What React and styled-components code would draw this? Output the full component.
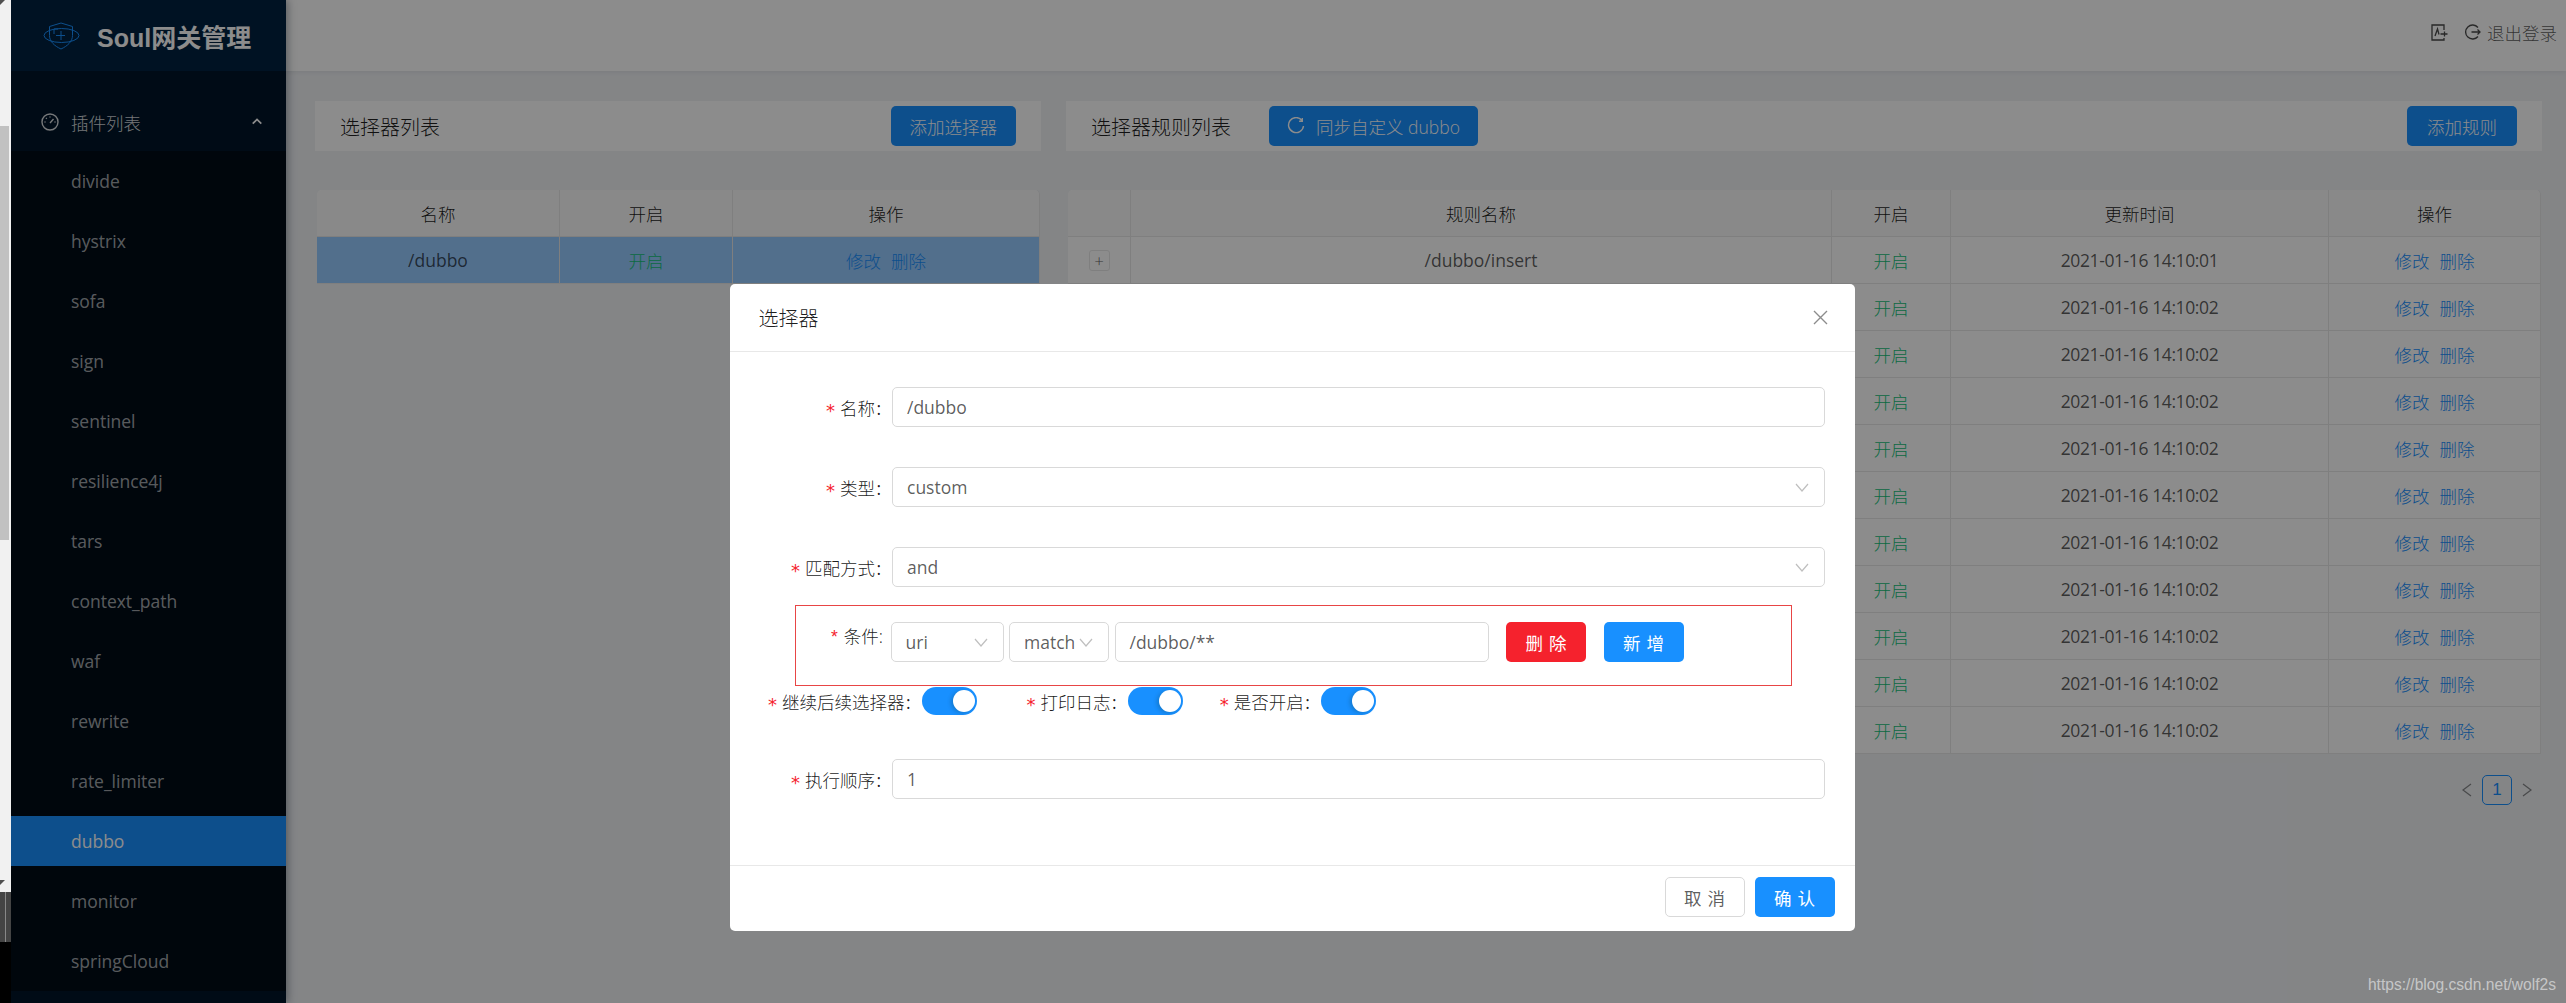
import React from "react";
import styled, { createGlobalStyle } from "styled-components";

const GlobalStyle = createGlobalStyle`
  html, body {
    margin: 0;
    padding: 0;
    height: 100%;
    overflow: hidden;
    background: #f0f2f5;
  }
  body {
    font-family: "Open Sans", "Noto Sans CJK SC", sans-serif;
    font-size: 17.5px;
    color: rgba(0, 0, 0, 0.65);
  }
  * { box-sizing: border-box; }
`;

const Page = styled.div`
  position: relative;
  display: flex;
  width: 2566px;
  height: 1003px;
  overflow: hidden;
`;

const ScrollStrip = styled.div`
  position: relative;
  flex: none;
  width: 11px;
  background: #f1f1f1;
  z-index: 7;
`;

const StripArrow = styled.div`
  position: absolute;
  left: 0;
  top: ${(p) => p.$top}px;
  width: 0;
  height: 0;
  border-top: 5px solid #505050;
  border-right: 5px solid transparent;
`;

const StripThumb = styled.div`
  position: absolute;
  left: 0;
  top: 126px;
  width: 9px;
  height: 414px;
  background: #c1c1c1;
`;

const StripBottom = styled.div`
  position: absolute;
  left: 0;
  right: 0;
  top: 892px;
  bottom: 0;
  background:
    linear-gradient(90deg, transparent 5px, #888 5px, #888 6px, transparent 6px) 0 0 / 100% 50px no-repeat,
    linear-gradient(#444 50px, #000 50px);
`;

const Sider = styled.aside`
  position: relative;
  flex: none;
  width: 275px;
  height: 1003px;
  background: #001529;
  box-shadow: 2px 0 8px rgba(0, 21, 41, 0.35);
  z-index: 2;
`;

const Logo = styled.div`
  display: flex;
  align-items: center;
  height: 71px;
  padding-left: 32px;
  gap: 17px;
  background: #002140;
  color: #fff;
  font-size: 25px;
  font-weight: 700;
  font-family: "Liberation Sans", "Noto Sans CJK SC", sans-serif;
  white-space: nowrap;
`;

const MenuTitle = styled.div`
  display: flex;
  align-items: center;
  height: 50px;
  margin-top: 26px;
  margin-bottom: 4px;
  padding: 0 23px 0 30px;
  gap: 12px;
  color: rgba(255, 255, 255, 0.85);
  font-weight: 300;
`;

const MenuTitleText = styled.span`
  flex: 1;
`;

const SubMenu = styled.div`
  display: flex;
  flex-direction: column;
  gap: 10px;
  padding: 5px 0;
  background: #000c17;
`;

const MenuItem = styled.div`
  height: 50px;
  line-height: 50px;
  padding-left: 60px;
  background: ${(p) => (p.$active ? "#1890ff" : "transparent")};
  color: ${(p) => (p.$active ? "#fff" : "rgba(255, 255, 255, 0.65)")};
`;

const Main = styled.div`
  flex: 1;
  min-width: 0;
  display: flex;
  flex-direction: column;
`;

const TopBar = styled.header`
  display: flex;
  align-items: center;
  justify-content: flex-end;
  height: 71px;
  padding: 0 9px 7px 0;
  gap: 17px;
  background: #fff;
  box-shadow: 0 1px 5px rgba(0, 21, 41, 0.08);
`;

const TopAction = styled.span`
  display: flex;
  align-items: center;
  gap: 6px;
  font-weight: 300;
`;

const Content = styled.div`
  display: flex;
  padding: 30px 25px 0 29px;
  gap: 25px;
`;

const LeftColumn = styled.section`
  flex: none;
  width: 726px;
`;

const RightColumn = styled.section`
  flex: none;
  width: 1476px;
`;

const PanelHead = styled.div`
  display: flex;
  align-items: center;
  height: 50px;
  padding: 0 25px;
  margin-bottom: 39px;
  background: #fff;
`;

const PanelTitle = styled.h2`
  margin: 0 38px 0 0;
  color: rgba(0, 0, 0, 0.9);
  font-size: 20px;
  font-weight: 300;
  white-space: nowrap;
`;

const PrimaryButton = styled.button`
  display: inline-flex;
  align-items: center;
  justify-content: center;
  gap: 11px;
  height: 40px;
  padding: 0 ${(p) => p.$pad || 19}px;
  margin-left: ${(p) => (p.$right ? "auto" : 0)};
  border: 0;
  border-radius: 5px;
  background: #1890ff;
  color: #fff;
  font: inherit;
  font-weight: 300;
  white-space: nowrap;
`;

const Table = styled.div`
  margin: 0 1px 0 2px;
  border-radius: 5px 5px 0 0;
  background: #fff;
  border-right: 1px solid #e8e8e8;
  overflow: hidden;
`;

const Row = styled.div`
  display: grid;
  grid-template-columns: ${(p) => p.$cols};
  height: 47px;
  background: ${(p) => (p.$selected ? "#96caff" : p.$head ? "#fafafa" : "#fff")};
  color: ${(p) => (p.$head ? "rgba(0, 0, 0, 0.9)" : "inherit")};
  font-weight: ${(p) => (p.$head ? 300 : 400)};
`;

const Cell = styled.div`
  display: flex;
  align-items: center;
  justify-content: center;
  gap: 10px;
  min-width: 0;
  border-right: 1px solid #e8e8e8;
  border-bottom: 1px solid #e8e8e8;
  color: ${(p) => (p.$on ? "#14c279" : "inherit")};
  font-weight: ${(p) => (p.$on ? 300 : "inherit")};
  letter-spacing: ${(p) => (p.$tight ? "-0.4px" : "normal")};
  white-space: nowrap;
  &:last-child { border-right: 0; }
`;

const Link = styled.a`
  color: #1890ff;
  font-weight: 300;
`;

const ExpandBox = styled.span`
  display: flex;
  align-items: center;
  justify-content: center;
  width: 21px;
  height: 21px;
  border: 1px solid #e8e8e8;
  border-radius: 3px;
  color: rgba(0, 0, 0, 0.65);
  font-size: 17px;
  font-weight: 300;
  line-height: 1;
`;

const Pagination = styled.nav`
  display: flex;
  align-items: center;
  justify-content: flex-end;
  height: 30px;
  margin-top: 21px;
  padding-right: 8px;
  gap: 8px;
`;

const PageNumber = styled.span`
  width: 30px;
  height: 30px;
  line-height: 28px;
  text-align: center;
  border: 1px solid #1890ff;
  border-radius: 5px;
  color: #1890ff;
  font-family: "Liberation Sans", sans-serif;
  font-size: 17px;
`;

const Mask = styled.div`
  position: absolute;
  inset: 0;
  background: rgba(0, 0, 0, 0.45);
  z-index: 4;
`;

const Watermark = styled.div`
  position: absolute;
  right: 10px;
  bottom: 9px;
  color: rgba(255, 255, 255, 0.55);
  font-family: "Liberation Sans", sans-serif;
  font-size: 15.6px;
  z-index: 6;
`;

const Modal = styled.div`
  position: absolute;
  left: 729.5px;
  top: 284px;
  width: 1125px;
  height: 647px;
  display: flex;
  flex-direction: column;
  background: #fff;
  border-radius: 5px;
  z-index: 5;
`;

const ModalHead = styled.div`
  display: flex;
  align-items: center;
  justify-content: space-between;
  flex: none;
  height: 68px;
  padding: 0 27px 0 29px;
  border-bottom: 1px solid #e8e8e8;
  color: rgba(0, 0, 0, 0.9);
  font-size: 20px;
  font-weight: 300;
`;

const ModalBody = styled.div`
  flex: 1;
  display: flex;
  flex-direction: column;
  padding-top: 35px;
`;

const FormRow = styled.div`
  display: flex;
  align-items: center;
  margin-bottom: ${(p) => p.$after ?? 40}px;
  padding-right: 30px;
`;

const Label = styled.label`
  flex: none;
  width: 162.5px;
  padding-right: 10px;
  text-align: right;
  color: rgba(0, 0, 0, 0.9);
  font-weight: 300;
  white-space: nowrap;
`;

const Star = styled.span`
  display: inline-block;
  margin-right: 5px;
  color: #f5222d;
  font-family: "DejaVu Sans", sans-serif;
  font-size: 18px;
  font-weight: 400;
  line-height: 1;
  transform: translateY(2px);
`;

const SmallStar = styled.span`
  margin-right: 6px;
  color: #f5222d;
  font-family: "Liberation Sans", sans-serif;
`;

const Colon = styled.span`
  margin-left: 1.5px;
  margin-right: 1px;
  font-weight: 400;
`;

const Field = styled.div`
  flex: ${(p) => (p.$width ? "none" : 1)};
  width: ${(p) => (p.$width ? `${p.$width}px` : "auto")};
  display: flex;
  align-items: center;
  justify-content: space-between;
  height: 40px;
  padding: 0 15px 0 14px;
  border: 1px solid #d9d9d9;
  border-radius: 5px;
  background: #fff;
  color: rgba(0, 0, 0, 0.65);
`;

const ConditionBox = styled.div`
  display: flex;
  align-items: flex-start;
  gap: 5.5px;
  width: 997px;
  height: 81px;
  margin: -22px 0 0 65.5px;
  padding-top: 16px;
  border: 1px solid #e84545;
`;

const ConditionLabel = styled.label`
  flex: none;
  width: 87px;
  margin-right: 2px;
  margin-top: 1px;
  text-align: right;
  color: rgba(0, 0, 0, 0.9);
  font-weight: 300;
  white-space: nowrap;
`;

const ActionButton = styled.button`
  flex: none;
  width: 80px;
  height: 40px;
  margin-left: ${(p) => p.$gap || 0}px;
  border: 1px solid ${(p) => (p.$kind === "ghost" ? "#d9d9d9" : "transparent")};
  border-radius: 5px;
  background: ${(p) => ({ danger: "#f5222d", ghost: "#fff" }[p.$kind] || "#1890ff")};
  color: ${(p) => (p.$kind === "ghost" ? "rgba(0, 0, 0, 0.65)" : "#fff")};
  font: inherit;
  letter-spacing: 6px;
  text-indent: 6px;
`;

const SwitchRow = styled.div`
  display: flex;
  align-items: center;
  height: 28px;
  margin: 1px 0 44px 38.5px;
`;

const SwitchLabel = styled.label`
  color: rgba(0, 0, 0, 0.9);
  font-weight: 300;
  margin-right: 10px;
  white-space: nowrap;
`;

const Switch = styled.span`
  position: relative;
  flex: none;
  width: 55px;
  height: 28px;
  margin-right: ${(p) => p.$after || 0}px;
  border-radius: 14px;
  background: #1890ff;
  &::after {
    content: "";
    position: absolute;
    top: 3px;
    right: 2px;
    width: 22px;
    height: 22px;
    border-radius: 50%;
    background: #fff;
    box-shadow: -2px 1px 4px rgba(0, 35, 11, 0.2);
  }
`;

const ModalFoot = styled.div`
  display: flex;
  align-items: center;
  justify-content: flex-end;
  flex: none;
  height: 66px;
  padding: 0 20px 3px 0;
  gap: 10px;
  border-top: 1px solid #e8e8e8;
`;

const Chevron = ({ size = 14, color = "#bfbfbf", dir = "down", width = 1.2 }) => (
  <svg width={size} height={size} viewBox="0 0 14 14" fill="none" stroke={color} strokeWidth={width}>
    {dir === "down" && <path d="M1 4l6 7 6-7" />}
    {dir === "up" && <path d="M2 9l5-5 5 5" />}
    {dir === "left" && <path d="M11 1L3 7l8 6" />}
    {dir === "right" && <path d="M3 1l8 6-8 6" />}
  </svg>
);

const ShieldLogo = () => (
  <svg width="37" height="28" viewBox="0 0 37 28" fill="none" stroke="#1890ff" strokeWidth="1">
    <path d="M18 1l11.500 3.500v9c0 6-5 10.500-11.500 13.500-6.500-3-11.500-7.500-11.500-13.500v-9z" />
    <ellipse cx="18.500" cy="13.500" rx="17.500" ry="7" />
    <path d="M11 7h4M11 7v5M13 13.500h9M18 9v9" />
  </svg>
);

const GaugeIcon = () => (
  <svg width="18" height="18" viewBox="0 0 18 18" fill="none" stroke="rgba(255,255,255,0.85)" strokeWidth="1.400">
    <circle cx="9" cy="9" r="8" />
    <path d="M9 10l3.500-4M3.500 9h1M13.500 9h1M9 3.500v1M5 5l.8.8" />
  </svg>
);

const RefreshIcon = () => (
  <svg width="18" height="18" viewBox="0 0 18 18" fill="none" stroke="currentColor" strokeWidth="1.400">
    <path d="M15 3.500A7.500 7.500 0 1 0 16.500 9M15.300 1v3.200h-3.200" />
  </svg>
);

const ExportIcon = () => (
  <svg width="17" height="17" viewBox="0 0 17 17" fill="none" stroke="#4a4a4a" strokeWidth="1.300">
    <path d="M13 6V1H1v15h12v-2" />
    <path d="M4 12l2.500-7L8 10.500M9.500 10h7M13.500 7.500v5" />
  </svg>
);

const LogoutIcon = () => (
  <svg width="16" height="16" viewBox="0 0 16 16" fill="none" stroke="#4a4a4a" strokeWidth="1.300">
    <path d="M13 3.500A7 7 0 1 0 13 12.500M6.500 8H15M12.500 5.500L15 8 12.500 10.500" />
  </svg>
);

const CloseIcon = () => (
  <svg width="15" height="15" viewBox="0 0 15 15" stroke="rgba(0,0,0,0.45)" strokeWidth="1.400">
    <path d="M1 1l13 13M14 1L1 14" />
  </svg>
);

const plugins = [
  "divide", "hystrix", "sofa", "sign", "sentinel", "resilience4j", "tars",
  "context_path", "waf", "rewrite", "rate_limiter", "dubbo", "monitor", "springCloud",
];

const ruleNames = [
  "/dubbo/insert", "/dubbo/findById", "/dubbo/findAll", "/dubbo/findByIdsAndName",
  "/dubbo/findByArrayIdsAndName", "/dubbo/findByStringArray", "/dubbo/findByListId",
  "/dubbo/batchSave", "/dubbo/batchSaveAndNameAndId", "/dubbo/saveComplexBeanTest",
  "/dubbo/saveComplexBeanTestAndName",
];

const leftCols = "243px 173px 1fr";
const rightCols = "63px 701px 119px 378px 1fr";

export default function App() {
  return (
    <>
      <GlobalStyle />
      <Page>
        <ScrollStrip>
          <StripArrow $top={0} />
          <StripThumb />
          <StripArrow $top={880} />
          <StripBottom />
        </ScrollStrip>

        <Sider>
          <Logo>
            <ShieldLogo />
            <span>Soul网关管理</span>
          </Logo>
          <MenuTitle>
            <GaugeIcon />
            <MenuTitleText>插件列表</MenuTitleText>
            <Chevron dir="up" size={12} color="#fff" width={2} />
          </MenuTitle>
          <SubMenu>
            {plugins.map((name) => (
              <MenuItem key={name} $active={name === "dubbo"}>
                {name}
              </MenuItem>
            ))}
          </SubMenu>
        </Sider>

        <Main>
          <TopBar>
            <TopAction>
              <ExportIcon />
            </TopAction>
            <TopAction>
              <LogoutIcon />
              退出登录
            </TopAction>
          </TopBar>

          <Content>
            <LeftColumn>
              <PanelHead>
                <PanelTitle>选择器列表</PanelTitle>
                <PrimaryButton $right>添加选择器</PrimaryButton>
              </PanelHead>
              <Table>
                <Row $head $cols={leftCols}>
                  <Cell>名称</Cell>
                  <Cell>开启</Cell>
                  <Cell>操作</Cell>
                </Row>
                <Row $selected $cols={leftCols}>
                  <Cell>/dubbo</Cell>
                  <Cell $on>开启</Cell>
                  <Cell>
                    <Link>修改</Link>
                    <Link>删除</Link>
                  </Cell>
                </Row>
              </Table>
            </LeftColumn>

            <RightColumn>
              <PanelHead>
                <PanelTitle>选择器规则列表</PanelTitle>
                <PrimaryButton $pad={18}>
                  <RefreshIcon />
                  同步自定义 dubbo
                </PrimaryButton>
                <PrimaryButton $right $pad={20}>添加规则</PrimaryButton>
              </PanelHead>
              <Table>
                <Row $head $cols={rightCols}>
                  <Cell />
                  <Cell>规则名称</Cell>
                  <Cell>开启</Cell>
                  <Cell>更新时间</Cell>
                  <Cell>操作</Cell>
                </Row>
                {ruleNames.map((name, i) => (
                  <Row key={name} $cols={rightCols}>
                    <Cell>
                      <ExpandBox>+</ExpandBox>
                    </Cell>
                    <Cell>{name}</Cell>
                    <Cell $on>开启</Cell>
                    <Cell $tight>2021-01-16 14:10:0{i === 0 ? 1 : 2}</Cell>
                    <Cell>
                      <Link>修改</Link>
                      <Link>删除</Link>
                    </Cell>
                  </Row>
                ))}
              </Table>
              <Pagination>
                <Chevron dir="left" color="rgba(0,0,0,0.45)" />
                <PageNumber>1</PageNumber>
                <Chevron dir="right" color="rgba(0,0,0,0.45)" />
              </Pagination>
            </RightColumn>
          </Content>
        </Main>

        <Mask />
        <Watermark>https://blog.csdn.net/wolf2s</Watermark>

        <Modal>
          <ModalHead>
            选择器
            <CloseIcon />
          </ModalHead>
          <ModalBody>
            <FormRow>
              <Label><Star>*</Star>名称<Colon>:</Colon></Label>
              <Field>/dubbo</Field>
            </FormRow>
            <FormRow>
              <Label><Star>*</Star>类型<Colon>:</Colon></Label>
              <Field>custom<Chevron /></Field>
            </FormRow>
            <FormRow>
              <Label><Star>*</Star>匹配方式<Colon>:</Colon></Label>
              <Field>and<Chevron /></Field>
            </FormRow>

            <ConditionBox>
              <ConditionLabel><SmallStar>*</SmallStar>条件:</ConditionLabel>
              <Field $width={113}>uri<Chevron /></Field>
              <Field $width={100}>match<Chevron /></Field>
              <Field $width={374}>/dubbo/**</Field>
              <ActionButton $kind="danger" $gap={12}>删除</ActionButton>
              <ActionButton $gap={12}>新增</ActionButton>
            </ConditionBox>

            <SwitchRow>
              <SwitchLabel><Star>*</Star>继续后续选择器<Colon>:</Colon></SwitchLabel>
              <Switch $after={50} />
              <SwitchLabel><Star>*</Star>打印日志<Colon>:</Colon></SwitchLabel>
              <Switch $after={37} />
              <SwitchLabel><Star>*</Star>是否开启<Colon>:</Colon></SwitchLabel>
              <Switch />
            </SwitchRow>

            <FormRow $after={0}>
              <Label><Star>*</Star>执行顺序<Colon>:</Colon></Label>
              <Field>1</Field>
            </FormRow>
          </ModalBody>
          <ModalFoot>
            <ActionButton $kind="ghost">取消</ActionButton>
            <ActionButton>确认</ActionButton>
          </ModalFoot>
        </Modal>
      </Page>
    </>
  );
}
